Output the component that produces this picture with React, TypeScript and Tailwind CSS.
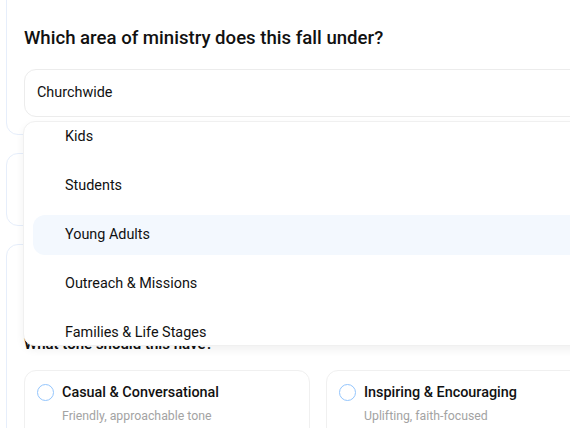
import React from "react";

const areas = ["Kids", "Students", "Young Adults", "Outreach & Missions", "Families & Life Stages"];

const tones = [
  { title: "Casual & Conversational", sub: "Friendly, approachable tone" },
  { title: "Inspiring & Encouraging", sub: "Uplifting, faith-focused" },
];

const App: React.FC = () => {
  return (
    <div
      className="relative w-[570px] h-[428px] overflow-hidden bg-white text-[#111111]"
      style={{ fontFamily: "Roboto, 'Noto Sans', sans-serif" }}
    >
      <div className="w-[640px] pl-[6px] mt-[-20px] flex flex-col gap-[18px]">
        {/* question 1 */}
        <section className="rounded-xl border border-[#e6eefb] pt-[43px] pb-[17px] pl-[17px]">
          <h2 className="text-[18.6px] leading-[28px] font-medium">
            Which area of ministry does this fall under?
          </h2>
          <div className="mt-[17px] h-[48px] rounded-xl border border-[#ececec] flex items-center pl-[12px] text-[14.4px]">
            Churchwide
          </div>
        </section>

        {/* question 2 (hidden under menu) */}
        <section className="h-[73px] rounded-xl border border-[#e6eefb]" />

        {/* question 3 */}
        <section className="rounded-xl border border-[#e6eefb] pt-[87px] pl-[17px] pb-6">
          <h3 className="text-[15px] leading-[24px] font-semibold">What tone should this have?</h3>
          <div className="mt-[14px] grid grid-cols-2 gap-4 w-[588px]">
            {tones.map((t) => (
              <div key={t.title} className="h-[80px] rounded-xl border border-[#f0f0f0] pl-[12px] pt-[11px]">
                <div className="flex items-center gap-[8px]">
                  <span className="w-[17px] h-[17px] rounded-full border-[1.5px] border-[#93c5fd]" />
                  <span className="text-[14.4px] font-medium">{t.title}</span>
                </div>
                <div className="pl-[25px] mt-[3px] text-[12.3px] text-[#a3a3a3]">{t.sub}</div>
              </div>
            ))}
          </div>
        </section>
      </div>

      {/* open dropdown */}
      <div className="absolute left-[23px] top-[121px] w-[600px] h-[225px] overflow-hidden rounded-xl border border-[#f0f0f0] bg-white shadow-[0_4px_8px_rgba(0,0,0,0.06)]">
        <ul className="mt-[-5px] px-[9px] flex flex-col gap-[9px]">
          {areas.map((a) => (
            <li
              key={a}
              className={`h-[40px] rounded-xl flex items-center pl-[32px] text-[14.4px] ${
                a === "Young Adults" ? "bg-[#f3f8fe]" : ""
              }`}
            >
              {a}
            </li>
          ))}
        </ul>
      </div>
    </div>
  );
};

export default App;
